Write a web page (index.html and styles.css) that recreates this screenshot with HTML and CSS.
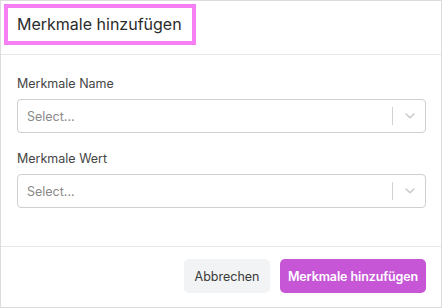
FILE: index.html
```html
<!DOCTYPE html>
<html lang="de">
<head>
  <meta charset="UTF-8" />
  <meta name="viewport" content="width=device-width, initial-scale=1.0" />
  <title>Merkmale hinzufügen</title>
  <link rel="stylesheet" href="styles.css">
</head>
<body>
  <div class="modal">
    <div class="modal-header">
      <h2 class="modal-title">Merkmale hinzufügen</h2>
    </div>

    <div class="modal-body">
      <div class="field">
        <label class="field-label">Merkmale Name</label>
        <div class="select">
          <span class="select-placeholder">Select...</span>
          <span class="select-sep"></span>
          <span class="select-arrow">
            <svg width="12" height="8" viewBox="0 0 12 8">
              <path d="M2 2 L6 5.8 L10 2" fill="none" stroke="#c8c8c8" stroke-width="1.4" stroke-linecap="round" stroke-linejoin="round"/>
            </svg>
          </span>
        </div>
      </div>

      <div class="field">
        <label class="field-label">Merkmale Wert</label>
        <div class="select">
          <span class="select-placeholder">Select...</span>
          <span class="select-sep"></span>
          <span class="select-arrow">
            <svg width="12" height="8" viewBox="0 0 12 8">
              <path d="M2 2 L6 5.8 L10 2" fill="none" stroke="#c8c8c8" stroke-width="1.4" stroke-linecap="round" stroke-linejoin="round"/>
            </svg>
          </span>
        </div>
      </div>
    </div>

    <div class="modal-footer">
      <button class="btn btn-light">Abbrechen</button>
      <button class="btn btn-primary">Merkmale hinzufügen</button>
    </div>
  </div>
</body>
</html>
```

FILE: styles.css
```css
* {
  box-sizing: border-box;
}

body {
  margin: 0;
  background: #fff;
  font-family: Inter, "Noto Sans", sans-serif;
  color: #333;
}

.modal {
  width: 442px;
  height: 308px;
  border: 1px solid #dcdcdc;
  display: flex;
  flex-direction: column;
}

/* Kopfzeile */
.modal-header {
  height: 54px;
  border-bottom: 1px solid #e6e6e6;
  padding: 3px 0 0 3px;
}

.modal-title {
  display: inline-block;
  margin: 0;
  padding: 0 10px 0 9px;
  height: 41px;
  line-height: 33px;
  border: 4px solid #f57ff3;
  font-size: 16px;
  font-weight: 400;
  color: #2b2b2b;
}

/* Formular */
.modal-body {
  flex: 1;
  padding: 21px 15px 0 16px;
}

.field {
  margin-bottom: 18px;
}

.field-label {
  display: block;
  font-size: 12.5px;
  line-height: 16px;
  color: #454545;
  margin-bottom: 7px;
}

.select {
  height: 34px;
  border: 1px solid #cfcfcf;
  border-radius: 4px;
  display: flex;
  align-items: center;
}

.select-placeholder {
  flex: 1;
  padding-left: 9px;
  font-size: 12.5px;
  color: #8a8a8a;
}

.select-sep {
  width: 1px;
  height: 18px;
  background: #d2d2d2;
}

.select-arrow {
  width: 32px;
  display: flex;
  justify-content: center;
  align-items: center;
  padding-left: 1px;
}

/* Fußzeile */
.modal-footer {
  border-top: 1px solid #e6e6e6;
  height: 61px;
  padding: 12px 15px 0 0;
  display: flex;
  justify-content: flex-end;
  gap: 10px;
}

.btn {
  height: 34px;
  border: none;
  border-radius: 5px;
  font-family: Inter, "Noto Sans", sans-serif;
  font-size: 12.5px;
  cursor: pointer;
}

.btn-light {
  width: 86px;
  background: #f1f3f5;
  color: #3a3a3a;
}

.btn-primary {
  width: 146px;
  background: #c756d7;
  color: #fff;
  font-weight: 600;
  letter-spacing: -0.1px;
}
```
